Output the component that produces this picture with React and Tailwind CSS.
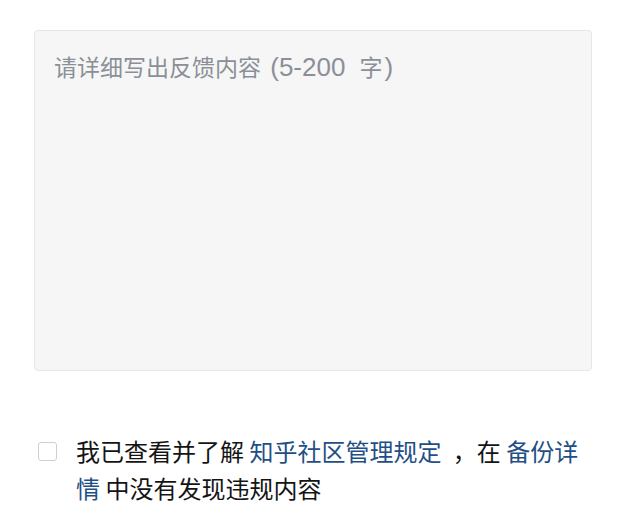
export default function App() {
  const font = { fontFamily: '"Noto Sans", "Noto Sans CJK SC", sans-serif' };
  const cjk = { fontFamily: '"Noto Sans CJK SC", sans-serif' };
  const latin = { fontFamily: '"Liberation Sans", "Noto Sans CJK SC", sans-serif' };
  return (
    <div className="w-[621px] h-[529px] bg-white overflow-hidden" style={font}>
      <div className="pl-[34px] pt-[30px]">
        <div className="w-[558px] h-[341px] rounded-[4px] border border-[#e6e6e6] bg-[#f6f6f6] px-[19px] pt-[19px] text-[#8b8f97]">
          <p className="text-[23px] leading-[32px] whitespace-nowrap">
            <span style={cjk}>请详细写出反馈内容</span>
            <span style={latin} className="text-[26px] [word-spacing:2px]"> (5-200 </span>
            <span style={cjk} className="ml-[5px]">字</span>
            <span style={latin} className="text-[26px] ml-[2px]">)</span>
          </p>
        </div>
        <div className="mt-[61px] flex items-start pl-[4px]">
          <div className="mt-[10px] w-[19px] h-[19px] shrink-0 rounded-[3px] border border-[#cfcfcf] bg-white" />
          <p className="ml-[19px] w-[522px] text-[24px] leading-[37px] text-[#141414]" style={cjk}>
            我已查看并了解 <span className="text-[#1f4f86]">知乎社区管理规定</span> <span className="ml-[6px]">，</span>在 <span className="text-[#1f4f86]">备份详情</span> 中没有发现违规内容
          </p>
        </div>
      </div>
    </div>
  );
}
